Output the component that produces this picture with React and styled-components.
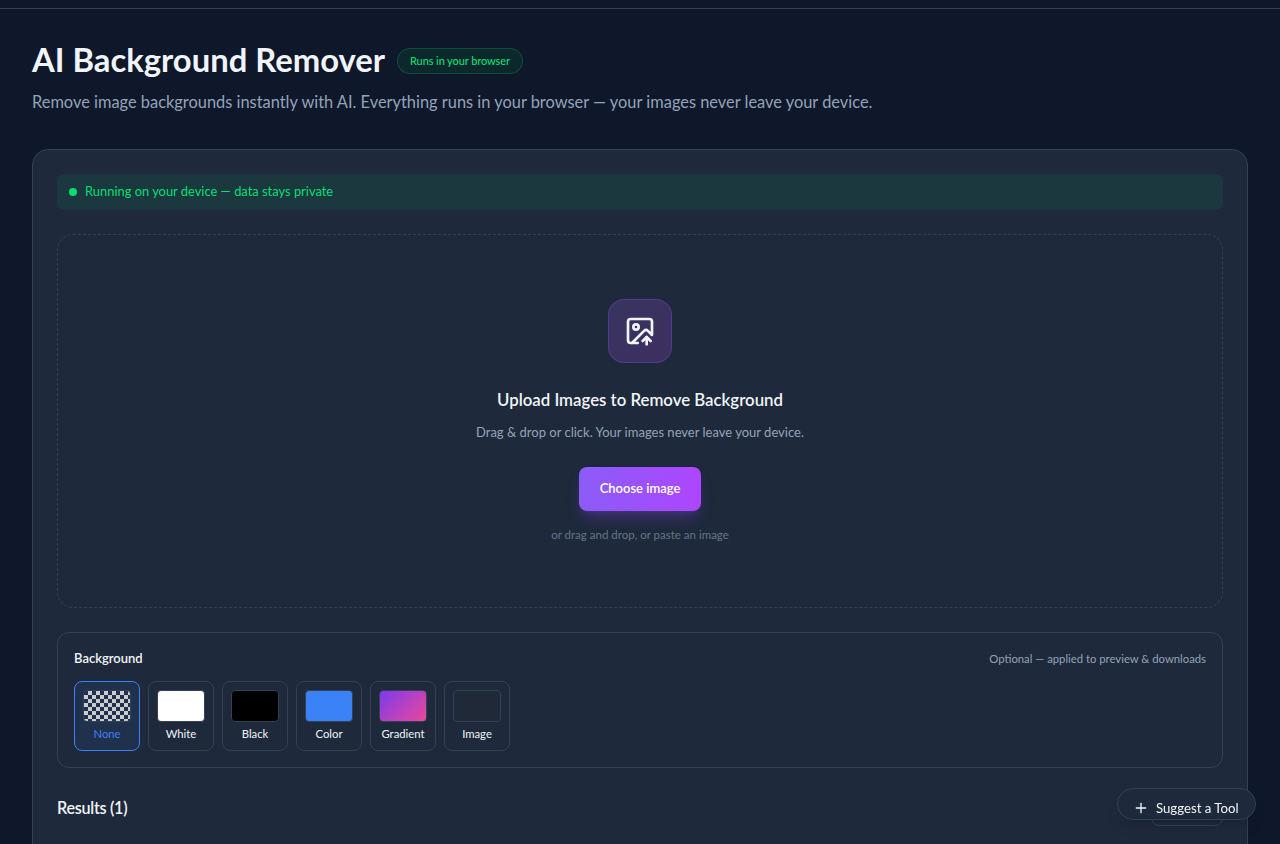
import styled, { createGlobalStyle, css } from "styled-components";
import { ImageUp, Plus } from "lucide-react";

const TEXT = "#f1f5f9";
const MUTED = "#94a3b8";
const BORDER = "#334155";
const SURFACE = "#1e293b";
const PAGE = "#0f172a";
const GREEN = "#05df72";
const BLUE = "#3b82f6";

const GlobalStyle = createGlobalStyle`
  * {
    box-sizing: border-box;
    margin: 0;
  }
  body {
    background: ${PAGE};
    color: ${TEXT};
    font-family: Lato, "Open Sans", sans-serif;
    overflow: hidden;
  }
  button {
    font-family: inherit;
    color: inherit;
    cursor: pointer;
  }
`;

const Page = styled.div`
  height: 844px;
  overflow: hidden;
`;
const TopBar = styled.div`
  height: 9px;
  border-bottom: 1px solid ${BORDER};
`;
const Main = styled.main`
  padding: 32px 32px 0;
`;
const TitleRow = styled.div`
  display: flex;
  align-items: center;
  gap: 12px;
  height: 40px;
`;
const Title = styled.h1`
  width: 353px;
  padding-bottom: 2px;
  font-size: 32.8px;
  line-height: 38px;
  font-weight: 700;
  white-space: nowrap;
`;
const Badge = styled.span`
  width: 126px;
  height: 26px;
  padding: 0 12px;
  border: 1px solid rgba(0, 201, 80, 0.25);
  border-radius: 13px;
  background: rgba(0, 201, 80, 0.1);
  color: ${GREEN};
  font-size: 11px;
  line-height: 24px;
  font-weight: 500;
  letter-spacing: -0.1px;
  white-space: nowrap;
`;
const Subtitle = styled.p`
  margin-top: 7px;
  height: 29px;
  color: ${MUTED};
  font-size: 16.4px;
  line-height: 28px;
`;
const Card = styled.section`
  margin-top: 32px;
  height: 900px;
  padding: 24px;
  border: 1px solid ${BORDER};
  border-radius: 16px;
  background: ${SURFACE};
`;
const Notice = styled.div`
  display: flex;
  align-items: center;
  gap: 8px;
  height: 36px;
  padding: 0 12px;
  border-radius: 8px;
  background: rgba(0, 201, 80, 0.1);
  color: ${GREEN};
  font-size: 12.9px;
  line-height: 18px;
`;
const NoticeText = styled.span`
  padding-bottom: 2px;
`;
const Dot = styled.span`
  width: 8px;
  height: 8px;
  border-radius: 50%;
  background: ${GREEN};
`;
const DropZone = styled.div`
  display: flex;
  flex-direction: column;
  align-items: center;
  height: 374px;
  margin-top: 24px;
  padding-top: 64px;
  border: 1px dashed ${BORDER};
  border-radius: 16px;
`;
const IconBox = styled.div`
  display: flex;
  align-items: center;
  justify-content: center;
  width: 64px;
  height: 64px;
  border: 1px solid rgba(142, 81, 255, 0.3);
  border-radius: 16px;
  background: linear-gradient(135deg, #393461, #3c2f5e);
`;
const DropTitle = styled.h2`
  margin-top: 23px;
  font-size: 16.8px;
  line-height: 28px;
  font-weight: 600;
`;
const DropText = styled.p`
  margin-top: 8px;
  margin-bottom: 1px;
  color: ${MUTED};
  font-size: 13px;
  line-height: 20px;
`;
const ChooseButton = styled.button`
  width: 122px;
  height: 44px;
  margin-top: 24px;
  padding-bottom: 3px;
  border: 0;
  border-radius: 8px;
  background: linear-gradient(90deg, #8b5cf6, #ad46ff);
  box-shadow: 0 10px 15px -3px rgba(142, 81, 255, 0.25), 0 4px 6px -4px rgba(142, 81, 255, 0.25);
  color: #fff;
  font-size: 13px;
  font-weight: 600;
`;
const DropHint = styled.p`
  margin-top: 16px;
  color: #64748b;
  font-size: 11.5px;
  line-height: 16px;
`;
const BackgroundPanel = styled.div`
  height: 136px;
  margin-top: 24px;
  padding: 16px;
  border: 1px solid ${BORDER};
  border-radius: 12px;
`;
const PanelHead = styled.div`
  display: flex;
  align-items: center;
  justify-content: space-between;
  height: 20px;
  padding-bottom: 2px;
`;
const PanelTitle = styled.h3`
  font-size: 13px;
  font-weight: 600;
`;
const PanelNote = styled.span`
  color: ${MUTED};
  font-size: 11.3px;
`;
const Options = styled.div`
  display: flex;
  gap: 8px;
  margin-top: 12px;
`;
const Option = styled.button`
  display: flex;
  flex-direction: column;
  align-items: center;
  gap: 4px;
  width: 66px;
  height: 70px;
  padding: 8px 0 0;
  border: 1px solid ${BORDER};
  border-radius: 8px;
  background: transparent;
  font-size: 11.3px;
  line-height: 16px;
  ${({ $active }) =>
    $active &&
    css`
      border-color: ${BLUE};
      background: rgba(59, 130, 246, 0.1);
      color: ${BLUE};
    `}
`;
const Swatch = styled.span`
  width: 48px;
  height: 32px;
  border: 1px solid ${BORDER};
  border-radius: 4px;
  background: ${({ $fill }) => $fill};
`;
const ResultsHead = styled.div`
  display: flex;
  align-items: flex-start;
  justify-content: space-between;
  margin-top: 24px;
`;
const ResultsTitle = styled.h2`
  padding-top: 2px;
  font-size: 16.2px;
  line-height: 28px;
  font-weight: 600;
  letter-spacing: -0.3px;
`;
const ClearButton = styled.button`
  width: 72px;
  height: 34px;
  border: 1px solid ${BORDER};
  border-radius: 8px;
  background: transparent;
`;
const SuggestButton = styled.button`
  position: fixed;
  right: 24px;
  bottom: 24px;
  display: flex;
  align-items: center;
  gap: 7px;
  width: 139px;
  height: 32px;
  padding: 8px 0 0 15px;
  border: 1px solid ${BORDER};
  border-radius: 16px;
  background: ${SURFACE};
  box-shadow: 0 10px 15px -3px rgba(0, 0, 0, 0.1), 0 4px 6px -4px rgba(0, 0, 0, 0.1);
  font-size: 13.2px;
  white-space: nowrap;
`;

const options = [
  {
    label: "None",
    fill: "repeating-conic-gradient(#ccc 0% 25%, transparent 0% 50%) 0 0 / 8px 8px",
  },
  { label: "White", fill: "#fff" },
  { label: "Black", fill: "#000" },
  { label: "Color", fill: BLUE },
  { label: "Gradient", fill: "linear-gradient(135deg, #7c3aed, #ec4899)" },
  { label: "Image", fill: "#1f2937" },
];

const App = () => {
  return (
    <Page>
      <GlobalStyle />
      <TopBar />
      <Main>
        <TitleRow>
          <Title>AI Background Remover</Title>
          <Badge>Runs in your browser</Badge>
        </TitleRow>
        <Subtitle>
          Remove image backgrounds instantly with AI. Everything runs in your
          browser — your images never leave your device.
        </Subtitle>
        <Card>
          <Notice>
            <Dot />
            <NoticeText>Running on your device — data stays private</NoticeText>
          </Notice>
          <DropZone>
            <IconBox>
              <ImageUp size={32} />
            </IconBox>
            <DropTitle>Upload Images to Remove Background</DropTitle>
            <DropText>
              Drag &amp; drop or click. Your images never leave your device.
            </DropText>
            <ChooseButton>Choose image</ChooseButton>
            <DropHint>or drag and drop, or paste an image</DropHint>
          </DropZone>
          <BackgroundPanel>
            <PanelHead>
              <PanelTitle>Background</PanelTitle>
              <PanelNote>Optional — applied to preview &amp; downloads</PanelNote>
            </PanelHead>
            <Options>
              {options.map(({ label, fill }) => (
                <Option key={label} $active={label === "None"}>
                  <Swatch $fill={fill} />
                  {label}
                </Option>
              ))}
            </Options>
          </BackgroundPanel>
          <ResultsHead>
            <ResultsTitle>Results (1)</ResultsTitle>
            <ClearButton />
          </ResultsHead>
        </Card>
      </Main>
      <SuggestButton>
        <Plus size={16} />
        Suggest a Tool
      </SuggestButton>
    </Page>
  );
};

export default App;
